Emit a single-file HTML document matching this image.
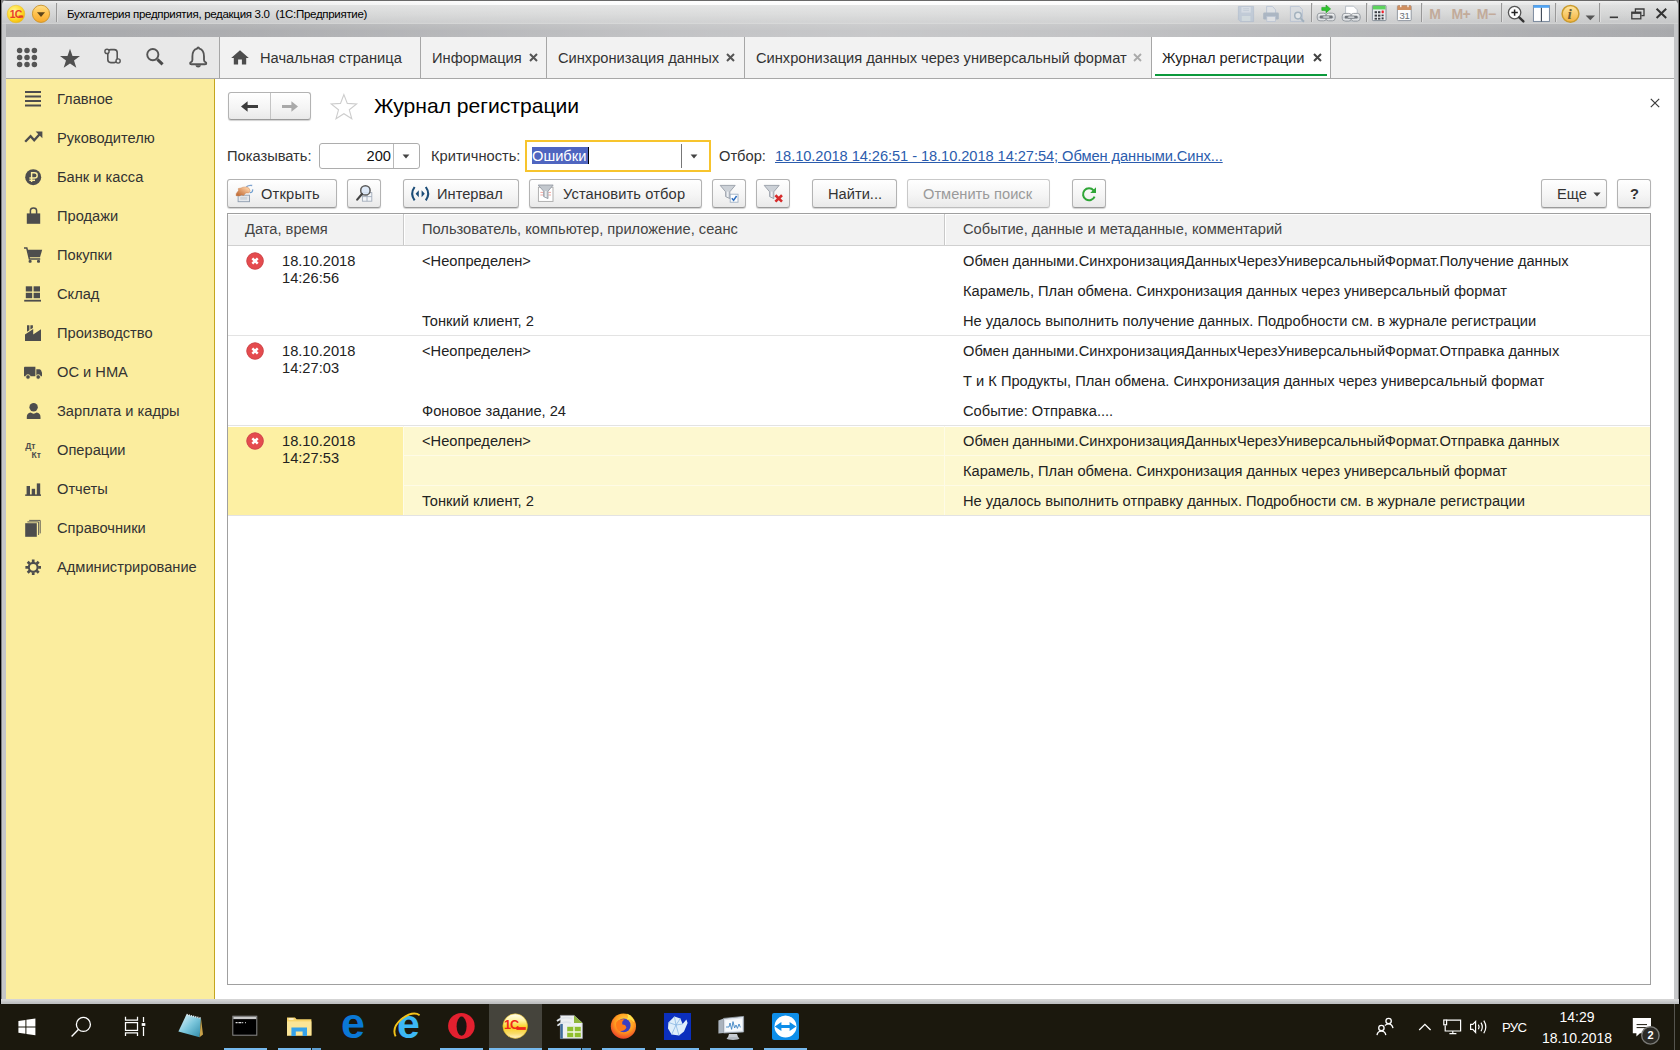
<!DOCTYPE html>
<html lang="ru">
<head>
<meta charset="utf-8">
<title>Журнал регистрации</title>
<style>
*{box-sizing:border-box;margin:0;padding:0}
html,body{width:1680px;height:1050px;overflow:hidden;background:#000}
body{position:relative;font-family:"Liberation Sans",sans-serif;font-size:14.67px;color:#333;line-height:17px}
.abs{position:absolute}
svg{position:absolute;overflow:visible}
/* window frame */
#frame{left:1px;top:0;width:1678px;height:1004px;background:#c5c6c8;border:1px solid #7e7e7e;border-top:0;border-bottom:0;border-radius:5px 5px 0 0;background-clip:padding-box}
#fbot{left:1px;top:999px;width:1678px;height:5px;background:linear-gradient(#d6d6d6 0,#d0d0d0 2px,#c3c4c5 3px,#bcbdbf 5px)}
#fcorner{left:1px;top:0;width:1678px;height:12px;background:#7e7e7e;border-radius:0}
#titlebar{left:2px;top:0;width:1676px;height:37px;border-radius:5px 5px 0 0;
 background:linear-gradient(#696969 0,#696969 1px,#ececec 1px,#e0e1e1 4px,#d4d5d5 14px,#c7c8c9 22.4px,#cfd0d0 23px,#cfd0d0 23.6px,#b1b2b4 24.2px,#a8a9ac 31px,#a9aaad 37px)}
#title{left:67px;top:6px;font-size:11.5px;color:#000;letter-spacing:-.3px;white-space:pre;line-height:16px}
.tsep{top:3px;width:2px;height:19px;background:linear-gradient(90deg,#989898 50%,#dedede 50%)}
/* tab bar */
#tabbar{left:6px;top:37px;width:1668px;height:42px;background:#f2f2f2;border-bottom:1px solid #a8a8a8}
#tools{left:6px;top:37px;width:214px;height:41px;background:#e8e8e8;border-right:1px solid #a6a6a6}
.tab{top:37px;height:41px;border-right:1px solid #a6a6a6;white-space:nowrap}
.tab span{position:absolute;top:13px;line-height:17px;color:#333}
.tx{position:absolute;top:16px;width:9px;height:9px}
/* sidebar */
#side{left:6px;top:79px;width:209px;height:920px;background:#fbed9e;border-right:1px solid #c4a51f}
.si{left:57px;white-space:nowrap;color:#333}
/* content */
#content{left:215px;top:79px;width:1459px;height:920px;background:#fff}
.btn{top:179px;height:29px;border:1px solid #b3b3b3;border-bottom-color:#9a9a9a;border-radius:3px;
 background:linear-gradient(#fff,#f4f4f4 60%,#e9e9e9);box-shadow:0 1px 1px rgba(0,0,0,.18);white-space:nowrap}
.btn span{position:absolute;top:6px;line-height:17px;color:#333}
.lbl{white-space:nowrap;color:#333}
/* table */
#tbl{left:227px;top:213px;width:1424px;height:772px;border:1px solid #a0a0a0;background:#fff}
.c{white-space:nowrap;color:#222}
/* taskbar */
#taskbar{left:0;top:1004px;width:1680px;height:46px;background:#1b180d}
.tb{color:#fff;white-space:nowrap}
</style>
</head>
<body>
<div id="fcorner" class="abs"></div>
<div id="frame" class="abs"></div>
<div id="fbot" class="abs"></div>
<div id="titlebar" class="abs"></div>
<div class="abs" style="left:6px;top:1px;width:1668px;height:3.5px;background:linear-gradient(90deg,rgba(255,255,255,0) 0,rgba(255,255,255,.9) 30%,rgba(255,255,255,.95) 52%,rgba(255,255,255,.9) 72%,rgba(255,255,255,0) 100%)"></div>
<div class="abs" style="left:6px;top:4.5px;width:1668px;height:19.5px;background:linear-gradient(90deg,rgba(255,255,255,0) 0,rgba(255,255,255,.16) 35%,rgba(255,255,255,.2) 52%,rgba(255,255,255,.16) 70%,rgba(255,255,255,0) 100%)"></div>
<div class="abs" style="left:2px;top:24px;width:1676px;height:13px;background:linear-gradient(90deg,rgba(255,255,255,0) 0,rgba(255,255,255,.06) 15%,rgba(255,255,255,.3) 40%,rgba(255,255,255,.36) 52%,rgba(255,255,255,.3) 65%,rgba(255,255,255,.1) 88%,rgba(255,255,255,0) 100%)"></div>
<div class="abs" style="left:2px;top:24px;width:4px;height:975px;background:#c5c6c8"></div><div class="abs" style="left:1674px;top:24px;width:4px;height:975px;background:#c5c6c8"></div>
<div id="title" class="abs">Бухгалтерия предприятия, редакция 3.0  (1С:Предприятие)</div>
<!--TI-S-->
<svg class="abs" style="left:0;top:0" width="1680" height="37" viewBox="0 0 1680 37">
<defs>
<radialGradient id="g1c" cx=".4" cy=".35" r=".7"><stop offset="0" stop-color="#fff79a"/><stop offset=".6" stop-color="#ffdc2e"/><stop offset="1" stop-color="#f2b705"/></radialGradient>
<linearGradient id="gor" x1="0" y1="0" x2="0" y2="1"><stop offset="0" stop-color="#ffe08a"/><stop offset=".5" stop-color="#ffc14d"/><stop offset="1" stop-color="#f7a92b"/></linearGradient>
<linearGradient id="ginf" x1="0" y1="0" x2="0" y2="1"><stop offset="0" stop-color="#ffe6a0"/><stop offset="1" stop-color="#f3b33e"/></linearGradient>
<linearGradient id="gch" x1="0" y1="0" x2="0" y2="1"><stop offset="0" stop-color="#f4f5f6"/><stop offset=".5" stop-color="#9ea3a8"/><stop offset="1" stop-color="#e4e6e8"/></linearGradient>
</defs>
<!-- 1C logo + menu -->
<circle cx="16" cy="14" r="8.8" fill="url(#g1c)" stroke="#e6bb22" stroke-width=".5"/>
<text x="9.8" y="17.7" font-family="Liberation Sans, sans-serif" font-size="10.4" font-weight="bold" fill="#e8402a" letter-spacing="-.9">1С</text>
<path d="M18.6 16.6 H23.2" stroke="#e8402a" stroke-width="2.2"/>
<circle cx="41" cy="13.8" r="8.6" fill="url(#gor)" stroke="#c9932a" stroke-width=".9"/>
<path d="M37 12.3 H45 L41 17 Z" fill="#5b431a"/>
<!-- disabled save/print/preview -->
<g opacity=".75">
<path d="M1238.4 6.4 H1253.6 V21.6 H1240.4 L1238.4 19.6 Z" fill="#b9c6d6" stroke="#a9b8cb" stroke-width=".8"/><rect x="1241.4" y="7" width="9.4" height="5.6" fill="#d3dbe5"/><rect x="1241.8" y="16" width="8.6" height="5" fill="#d0dbe0"/><path d="M1243.2 8.6 H1249 M1243.2 10.4 H1249" stroke="#b4c1d1" stroke-width=".7"/>
<path d="M1266.6 14 V6.4 H1272.4 L1275.6 9.8 V14" fill="#dfe3e8" stroke="#aebbd0" stroke-width=".9"/><rect x="1263.2" y="12.4" width="15.6" height="7.2" rx="1.4" fill="#9dabbc"/><rect x="1266.8" y="16.4" width="8.6" height="5.2" fill="#e2e5e9" stroke="#aebbd0" stroke-width=".7"/>
<path d="M1290.4 6.4 H1299.4 L1302.4 9.6 V21.4 H1290.4 Z" fill="#d9dde2" stroke="#aebbd0" stroke-width=".9"/><circle cx="1298" cy="15.6" r="3.3" fill="#e6eaee" stroke="#92a6b7" stroke-width="1.5"/><path d="M1300.6 18.4 L1304 21.8" stroke="#92a6b7" stroke-width="2"/>
</g>
<!-- link with green arrow -->
<linearGradient id="gch2" x1="0" y1="0" x2="0" y2="1"><stop offset="0" stop-color="#fafbfb"/><stop offset=".55" stop-color="#cfd3d7"/><stop offset="1" stop-color="#eceef0"/></linearGradient>
<rect x="1317.2" y="13.2" width="9.4" height="7.6" rx="2.8" fill="url(#gch2)" stroke="#8f949a" stroke-width=".9"/><rect x="1325.8" y="13.2" width="9.4" height="7.6" rx="2.8" fill="url(#gch2)" stroke="#8f949a" stroke-width=".9"/><rect x="1319.7" y="15.6" width="4.4" height="2.8" rx="1.2" fill="#6f747a"/><rect x="1328.3" y="15.6" width="4.4" height="2.8" rx="1.2" fill="#6f747a"/><rect x="1322.6000000000001" y="15.7" width="7.2" height="2.6" rx="1.3" fill="#c9cdd1" stroke="#70757b" stroke-width=".7"/>
<path d="M1321.8 7.4 H1326 V5 L1330.6 8.9 L1326 12.8 V10.4 H1321.8 Z" fill="#2fc42f" stroke="#1f9e1f" stroke-width=".6"/>
<!-- link with page -->
<path d="M1345.6 6.2 H1353.6 L1357.2 9.8 V21.2 H1345.6 Z" fill="#fff" stroke="#aab3bd" stroke-width=".8"/>
<rect x="1342.2" y="13.4" width="9.4" height="7.6" rx="2.8" fill="url(#gch2)" stroke="#8f949a" stroke-width=".9"/><rect x="1350.8" y="13.4" width="9.4" height="7.6" rx="2.8" fill="url(#gch2)" stroke="#8f949a" stroke-width=".9"/><rect x="1344.7" y="15.8" width="4.4" height="2.8" rx="1.2" fill="#6f747a"/><rect x="1353.3" y="15.8" width="4.4" height="2.8" rx="1.2" fill="#6f747a"/><rect x="1347.6000000000001" y="15.9" width="7.2" height="2.6" rx="1.3" fill="#c9cdd1" stroke="#70757b" stroke-width=".7"/>
<!-- calculator -->
<rect x="1372.4" y="5.4" width="13.6" height="15.2" rx=".8" fill="#e8ebee" stroke="#7d8791" stroke-width=".9"/><rect x="1372.9" y="5.8" width="12.6" height="3.6" fill="#5dd35d"/>
<g fill="#3c3f44"><rect x="1374.6" y="11.2" width="2.4" height="2"/><rect x="1378" y="11.2" width="2.4" height="2"/><rect x="1374.6" y="14.6" width="2.4" height="2"/><rect x="1378" y="14.6" width="2.4" height="2"/><rect x="1381.6" y="14.6" width="2" height="1.6"/><rect x="1374.6" y="17.8" width="2.4" height="1.8"/><rect x="1378" y="17.8" width="2.4" height="1.8"/><rect x="1381.6" y="17.4" width="2" height="2"/></g><rect x="1381.6" y="10.4" width="2.2" height="2.8" rx=".6" fill="#f0202a"/>
<!-- calendar -->
<rect x="1397.4" y="5.6" width="13.8" height="15" rx="1" fill="#fbfcfd" stroke="#8a919a" stroke-width=".9"/><path d="M1397.4 10 V6.6 Q1397.4 5.6 1398.4 5.6 H1410.2 Q1411.2 5.6 1411.2 6.6 V10 Z" fill="#cf8f60"/><rect x="1400.2" y="4.6" width="1.2" height="2.6" fill="#fff"/><rect x="1407.4" y="4.6" width="1.2" height="2.6" fill="#fff"/>
<text x="1399.6" y="19" font-family="Liberation Sans, sans-serif" font-size="9.5" fill="#6a6f76" letter-spacing="-.3">31</text>
<!-- M M+ M- -->
<g font-family="Liberation Sans, sans-serif" font-size="14" font-weight="bold" fill="#c2ab9b"><text x="1429.2" y="19.2">M</text><text x="1451.4" y="19.2" letter-spacing="-.6">M+</text><text x="1476.8" y="19.2" letter-spacing="-.4">M−</text></g>
<!-- zoom -->
<circle cx="1514.6" cy="12.6" r="6.2" fill="#fdfdfd" stroke="#555" stroke-width="1.3"/><path d="M1511.4 12.6 H1517.8 M1514.6 9.4 V15.8" stroke="#222" stroke-width="1.5"/><path d="M1519.2 17.4 L1523.4 21.4" stroke="#333" stroke-width="2.4" stroke-linecap="round"/>
<!-- panels -->
<rect x="1533.4" y="5.6" width="16" height="15.8" fill="#fff" stroke="#6f7f95" stroke-width=".9"/><rect x="1533.4" y="5.2" width="16" height="2.6" fill="#4fa4f4"/><path d="M1541.4 7.8 V21.4" stroke="#3a4452" stroke-width="1.1"/>
<!-- info -->
<circle cx="1570.5" cy="13.8" r="8.4" fill="url(#ginf)" stroke="#c99b2e" stroke-width="1.5"/>
<text x="1567.6" y="19.4" font-family="Liberation Serif, serif" font-size="15.5" font-weight="bold" font-style="italic" fill="#6b5d3a">i</text>
<path d="M1585.6 15.6 H1595 L1590.3 20.2 Z" fill="#555"/>
<!-- window controls -->
<path d="M1609.8 17.4 H1618" stroke="#3b3b3b" stroke-width="1.8"/><path d="M1609.8 19 H1618" stroke="#f2f2f2" stroke-width=".8"/>
<g fill="none" stroke="#3b3b3b" stroke-width="1.3"><path d="M1635.4 12 V9 H1644 V15.6 H1641.4"/><rect x="1631.8" y="12.2" width="9" height="6.6"/><path d="M1631.8 13 H1640.8" stroke-width="1.8"/></g>
<path d="M1656.6 8.8 L1666.2 18 M1666.2 8.8 L1656.6 18" stroke="#333" stroke-width="2"/>
</svg>
<div class="abs tsep" style="left:56px"></div>
<div class="abs tsep" style="left:1311px"></div>
<div class="abs tsep" style="left:1366px"></div>
<div class="abs tsep" style="left:1421px"></div>
<div class="abs tsep" style="left:1501px"></div>
<div class="abs tsep" style="left:1555px"></div>
<div class="abs tsep" style="left:1599px"></div>
<!--TI-E-->
<div id="tabbar" class="abs"></div>
<div id="tools" class="abs"></div>
<!--TABS-S-->
<!-- tool icons -->
<svg class="abs" style="left:15px;top:46px" width="24" height="22" viewBox="0 0 24 22"><g fill="#555">
<circle cx="4.6" cy="4.4" r="2.75"/><circle cx="12" cy="4.4" r="2.75"/><circle cx="19.4" cy="4.4" r="2.75"/>
<circle cx="4.6" cy="11.4" r="2.75"/><circle cx="12" cy="11.4" r="2.75"/><circle cx="19.4" cy="11.4" r="2.75"/>
<circle cx="4.6" cy="18.4" r="2.75"/><circle cx="12" cy="18.4" r="2.75"/><circle cx="19.4" cy="18.4" r="2.75"/></g></svg>
<svg class="abs" style="left:59px;top:48px" width="22" height="21" viewBox="0 0 22 21"><path fill="#505050" d="M11 0.8 L13.5 8 L21 8.1 L15 12.6 L17.3 19.8 L11 15.5 L4.7 19.8 L7 12.6 L1 8.1 L8.5 8 Z"/></svg>
<svg class="abs" style="left:0;top:0" width="220" height="79" viewBox="0 0 220 79"><g fill="none" stroke="#555" stroke-width="1.6">
<rect x="107.8" y="49.6" width="9.4" height="13" rx="3"/><circle cx="107" cy="51.4" r="2.1" fill="#e8e8e8" stroke-width="1.4"/><circle cx="118.1" cy="61" r="2.1" fill="#e8e8e8" stroke-width="1.4"/>
<circle cx="152.8" cy="54.6" r="5.6" stroke-width="1.9"/><path d="M157.4 59.4 L162.6 64.4" stroke="#4a4a4a" stroke-width="3"/>
<path d="M198.2 47.5 Q199 47.5 199.4 48.7 C203 49.7 204 53 204 56.5 V60 Q204 62 206.1 62.7 Q206.6 64 205.3 64.2 H191.1 Q189.8 64 190.3 62.7 Q192.4 62 192.4 60 V56.5 C192.4 53 193.4 49.7 197 48.7 Q197.4 47.5 198.2 47.5 Z" stroke-width="1.85" stroke-linejoin="round"/></g>
<path d="M195.4 65.2 H201 Q200.6 67.6 198.2 67.6 Q195.8 67.6 195.4 65.2 Z" fill="#555"/></svg>
<!-- tabs -->
<div class="abs tab" style="left:220px;width:201px"><svg style="left:11px;top:13px" width="18" height="15" viewBox="0 0 18 15"><path fill="#4d4d4d" d="M9 0.3 L17.8 8 H15.2 V14.4 H10.9 V9.4 H7.1 V14.4 H2.8 V8 H0.2 Z"/></svg><span style="left:40px">Начальная страница</span></div>
<div class="abs tab" style="left:421px;width:126px"><span style="left:11px">Информация</span><svg class="tx" style="left:108px" viewBox="0 0 9 9"><path d="M1 1 L8 8 M8 1 L1 8" stroke="#555" stroke-width="2"/></svg></div>
<div class="abs tab" style="left:547px;width:198px"><span style="left:11px">Синхронизация данных</span><svg class="tx" style="left:179px" viewBox="0 0 9 9"><path d="M1 1 L8 8 M8 1 L1 8" stroke="#555" stroke-width="2"/></svg></div>
<div class="abs tab" style="left:745px;width:407px"><span style="left:11px">Синхронизация данных через универсальный формат</span><svg class="tx" style="left:388px" viewBox="0 0 9 9"><path d="M1 1 L8 8 M8 1 L1 8" stroke="#aaa" stroke-width="1.8"/></svg></div>
<div class="abs tab" style="left:1152px;width:179px;background:#fff"><span style="left:10px;color:#222">Журнал регистрации</span><svg class="tx" style="left:161px" viewBox="0 0 9 9"><path d="M1 1 L8 8 M8 1 L1 8" stroke="#444" stroke-width="2"/></svg><div class="abs" style="left:3px;top:37px;width:172px;height:2px;background:#0c9a3c"></div></div>
<!--TABS-E-->
<div id="side" class="abs"></div>
<!--SIDE-S-->
<svg class="abs" style="left:0;top:0" width="215" height="600" viewBox="0 0 215 600"><g fill="#4d4d4d">
<!-- hamburger -->
<rect x="25" y="91" width="16" height="2"/><rect x="25" y="95.5" width="16" height="2"/><rect x="25" y="100" width="16" height="2"/><rect x="25" y="104.5" width="16" height="2"/>
<!-- trend -->
<path d="M25.2 141.8 L30.6 136.2 L34.2 140.2 L39.6 134.2" fill="none" stroke="#4d4d4d" stroke-width="2.3" stroke-linejoin="miter"/><path d="M35.6 131.6 H42.4 V138.2 Z"/>
<!-- ruble -->
<circle cx="33.2" cy="177.2" r="8"/>
<path d="M31.6 182 V172.8 H34.4 Q37.2 172.8 37.2 175.4 Q37.2 178 34.4 178 H29.4 M29.4 180.2 H35" fill="none" stroke="#fbed9e" stroke-width="1.4"/>
<!-- bag -->
<path d="M26.8 213.4 H40.2 V223.8 H26.8 Z"/><path d="M30.4 215 V210.6 Q30.4 207.9 33.5 207.9 Q36.6 207.9 36.6 210.6 V215" fill="none" stroke="#4d4d4d" stroke-width="1.5"/>
<!-- cart -->
<path d="M24 248 H26.8 L29.4 258.9 H40.2" fill="none" stroke="#4d4d4d" stroke-width="1.5"/><path d="M27.4 249.8 H42.2 L40 257.2 H29.2 Z"/><rect x="28.6" y="260" width="3" height="2.8" rx="1"/><rect x="37" y="260" width="3" height="2.8" rx="1"/>
<!-- sklad -->
<rect x="25.8" y="286.3" width="6.4" height="5.2"/><rect x="33.6" y="286.3" width="6.4" height="5.2"/><rect x="25.8" y="292.8" width="6.4" height="5.4"/><rect x="33.6" y="292.8" width="6.4" height="5.4"/><rect x="24.2" y="299.8" width="16.8" height="1.8"/>
<!-- factory -->
<path d="M25 341 V334.4 L33.2 329 V334.4 L41 329.2 V341 Z"/><path d="M27 325.2 H29.4 V330.2 L27 331.8 Z M30.4 325.2 H32.9 V327.9 L30.4 329.6 Z"/>
<!-- truck -->
<path d="M24.8 366.8 H35.4 V376.2 H24 V367.6 Q24 366.8 24.8 366.8 Z"/><path d="M36.3 369.2 H39.4 Q40.4 369.2 40.9 370.2 L42 372.6 V376.2 H36.3 Z"/>
<circle cx="28" cy="377" r="2.3" stroke="#fbed9e" stroke-width=".9"/><circle cx="38.2" cy="377" r="2.3" stroke="#fbed9e" stroke-width=".9"/>
<!-- person -->
<circle cx="33.6" cy="407.2" r="4.2"/><path d="M26.8 419 V417 Q26.8 413.4 30.6 412.6 Q33.6 414.8 36.6 412.6 Q40.5 413.4 40.5 417 V419 Z"/>
<!-- bars -->
<rect x="26.6" y="486" width="3.4" height="9"/><rect x="31.7" y="488.8" width="3.4" height="6.2"/><rect x="36.8" y="483.4" width="3.4" height="11.6"/><rect x="25.2" y="494.4" width="15.8" height="1.5"/>
<!-- books -->
<path d="M29.2 520.4 H40.2 V533.4" fill="none" stroke="#4d4d4d" stroke-width=".9"/><path d="M27.4 521.9 H38.6 V535" fill="none" stroke="#4d4d4d" stroke-width=".9"/><rect x="25.2" y="523.2" width="11.6" height="13.6"/>
<!-- gear -->
<circle cx="33.2" cy="567.3" r="4.4" fill="none" stroke="#4d4d4d" stroke-width="2.1"/>
<g stroke="#4d4d4d" stroke-width="2.7" fill="none"><path d="M33.2 559.5 V562.3 M33.2 572.3 V575.1 M25.4 567.3 H28.2 M38.2 567.3 H41 M27.7 561.8 L29.7 563.8 M36.7 570.8 L38.7 572.8 M38.7 561.8 L36.7 563.8 M29.7 570.8 L27.7 572.8"/></g>
</g>
<text x="25.2" y="449.4" font-family="Liberation Sans, sans-serif" font-size="8.6" font-weight="bold" fill="#4d4d4d">Дт</text>
<text x="31.4" y="458.2" font-family="Liberation Sans, sans-serif" font-size="8.6" font-weight="bold" fill="#4d4d4d">Кт</text>
</svg>
<div class="abs si" style="top:91px">Главное</div>
<div class="abs si" style="top:130px">Руководителю</div>
<div class="abs si" style="top:169px">Банк и касса</div>
<div class="abs si" style="top:208px">Продажи</div>
<div class="abs si" style="top:247px">Покупки</div>
<div class="abs si" style="top:286px">Склад</div>
<div class="abs si" style="top:325px">Производство</div>
<div class="abs si" style="top:364px">ОС и НМА</div>
<div class="abs si" style="top:403px">Зарплата и кадры</div>
<div class="abs si" style="top:442px">Операции</div>
<div class="abs si" style="top:481px">Отчеты</div>
<div class="abs si" style="top:520px">Справочники</div>
<div class="abs si" style="top:559px">Администрирование</div>
<!--SIDE-E-->
<div id="content" class="abs"></div>
<!--FORM-S-->
<!-- nav buttons -->
<div class="abs btn" style="left:228px;top:92px;width:83px;height:28px"></div>
<div class="abs" style="left:270px;top:93px;width:1px;height:26px;background:#c4c4c4"></div>
<svg class="abs" style="left:240px;top:100px" width="60" height="13" viewBox="0 0 60 13"><path d="M1 6.5 L7.6 1.2 V4.9 H18 V8.1 H7.6 V11.8 Z" fill="#3d3d3d"/><path d="M58 6.5 L51.4 1.2 V4.9 H42 V8.1 H51.4 V11.8 Z" fill="#a9a9a9"/></svg>
<svg class="abs" style="left:329px;top:93px" width="30" height="28" viewBox="0 0 30 28"><path d="M14.9 1.6 L18.3 10.4 L27.6 10.9 L20.3 16.8 L22.8 25.8 L14.9 20.7 L7.0 25.8 L9.5 16.8 L2.2 10.9 L11.5 10.4 Z" fill="#fff" stroke="#cdcdcd" stroke-width="1.1" stroke-linejoin="miter"/></svg>
<div class="abs" style="left:374px;top:94px;font-size:21.1px;line-height:24px;color:#000;white-space:nowrap">Журнал регистрации</div>
<svg class="abs" style="left:1650px;top:98px" width="10" height="10" viewBox="0 0 10 10"><path d="M0.8 0.8 L9.2 9.2 M9.2 0.8 L0.8 9.2" stroke="#3a3a3a" stroke-width="1.2"/></svg>
<!-- filters row -->
<div class="abs lbl" style="left:227px;top:148px">Показывать:</div>
<div class="abs" style="left:319px;top:143px;width:101px;height:26px;border:1px solid #adadad;border-radius:3px;background:#fff"></div>
<div class="abs" style="left:393px;top:144px;width:1px;height:24px;background:#b9b9b9"></div>
<div class="abs lbl" style="left:341px;top:148px;width:50px;text-align:right;color:#111">200</div>
<svg class="abs" style="left:402px;top:154px" width="8" height="5" viewBox="0 0 8 5"><path d="M0.6 0.5 H7.4 L4 4.6 Z" fill="#444"/></svg>
<div class="abs lbl" style="left:431px;top:148px">Критичность:</div>
<div class="abs" style="left:525px;top:140px;width:186px;height:32px;border:2px solid #f7c42d;background:#fff"></div>
<div class="abs" style="left:532px;top:147px;width:56px;height:17px;background:#4f65c0"></div>
<div class="abs" style="left:588px;top:147px;width:1px;height:17px;background:#000"></div>
<div class="abs lbl" style="left:532px;top:148px;color:#fff">Ошибки</div>
<div class="abs" style="left:681px;top:144px;width:1px;height:24px;background:#777"></div>
<svg class="abs" style="left:690px;top:154px" width="8" height="5" viewBox="0 0 8 5"><path d="M0.6 0.5 H7.4 L4 4.6 Z" fill="#444"/></svg>
<div class="abs lbl" style="left:719px;top:148px">Отбор:</div>
<div class="abs lbl" style="left:775px;top:148px;color:#2b5cad;text-decoration:underline;letter-spacing:-.07px">18.10.2018 14:26:51 - 18.10.2018 14:27:54; Обмен данными.Синх...</div>
<!-- buttons row -->
<div class="abs btn" style="left:227px;width:110px"><span style="left:33px;letter-spacing:.2px">Открыть</span>
<svg style="left:7px;top:4px" width="20" height="19" viewBox="0 0 20 19"><defs><linearGradient id="hnd" x1="0" y1="1" x2="1" y2="0"><stop offset="0" stop-color="#b9602a"/><stop offset=".45" stop-color="#dc9867"/><stop offset=".8" stop-color="#fbcb9f"/><stop offset="1" stop-color="#f1b887"/></linearGradient></defs><rect x="3.1" y="11.2" width="11.4" height="6.5" fill="#e6e9ed" stroke="#8d9bae" stroke-width=".9"/><rect x="5.2" y="12.8" width="7" height="3" fill="#cfd5db"/><path d="M11.4 2.7 Q13.8 .8 17.2 1.5" fill="none" stroke="#7fa3cf" stroke-width="1.3"/><path d="M14.8 8.6 Q17.9 8.7 17.6 5.4" fill="none" stroke="#6f9fd0" stroke-width="1.3"/><path d="M1 11.7 L1.3 9.4 L3.5 6.6 L3.3 4.5 L6 4 L8 3.2 L12 2.9 Q14.8 4 15 6.6 Q15.2 8.6 13.6 8.9 L10.8 9 L8.6 11.5 L6.4 11 L4.6 11.9 Z" fill="url(#hnd)" stroke="#c27a47" stroke-width=".4"/></svg></div>
<div class="abs btn" style="left:347px;width:34px"><svg style="left:7px;top:4px" width="20" height="20" viewBox="0 0 20 20"><rect x="7.4" y="8.6" width="9.4" height="8.6" fill="#f4f6f9" stroke="#a3adbb" stroke-width=".9"/><path d="M7.4 12.6 H16.8 M12 8.6 V17.2" stroke="#a3adbb" stroke-width=".9"/><circle cx="10.4" cy="6.4" r="4.7" fill="#dbe8f8" fill-opacity=".85" stroke="#5a5a5a" stroke-width="1.5"/><path d="M7 10 L2.2 15.6" stroke="#444" stroke-width="2.2" stroke-linecap="round"/></svg></div>
<div class="abs btn" style="left:403px;width:116px"><span style="left:33px">Интервал</span>
<svg style="left:6px;top:6px" width="22" height="16" viewBox="0 0 22 16"><path d="M4.6 1 Q-0.2 7.6 4.6 14.4" fill="none" stroke="#1b4c77" stroke-width="2.1"/><path d="M15.8 1 Q20.6 7.6 15.8 14.4" fill="none" stroke="#1b4c77" stroke-width="2.1"/><path d="M5.6 7.7 L8.8 4.2 V11.2 Z M14.8 7.7 L11.6 4.2 V11.2 Z" fill="#1b4c77"/></svg></div>
<div class="abs btn" style="left:529px;width:173px"><span style="left:33px;letter-spacing:.12px">Установить отбор</span>
<svg style="left:7px;top:4px" width="18" height="19" viewBox="0 0 18 19"><rect x="1.4" y="3.2" width="14.6" height="14.2" fill="#fff" stroke="#a9a9a9" stroke-width=".9"/><path d="M3.4 8.4 H6.4 M11.4 8.4 H14 M3.4 11 H6.4 M11.4 11 H14" stroke="#f0a7a0" stroke-width="1"/><path d="M1.2 1 H16.2 L11 7.2 V14.6 L6.6 12.6 V7.2 Z" fill="#c3c8ce" stroke="#8f969f" stroke-width=".8"/><path d="M8.8 7 V13" stroke="#e9ecef" stroke-width="1.6"/></svg></div>
<div class="abs btn" style="left:712px;width:34px"><svg style="left:6px;top:4px" width="22" height="20" viewBox="0 0 22 20"><path d="M1.2 1.4 H16.2 L10.8 7.8 V14.6 L6.6 12.6 V7.8 Z" fill="#ccd1d7" stroke="#8f969f" stroke-width=".8"/><path d="M8.7 7.6 V13" stroke="#eceff2" stroke-width="1.5"/><rect x="11.2" y="10.2" width="7.8" height="8" fill="#fff" stroke="#9fb0c4" stroke-width=".9"/><path d="M12.8 14.2 L14.6 16.2 L17.6 12" fill="none" stroke="#2f6fc0" stroke-width="1.5"/></svg></div>
<div class="abs btn" style="left:756px;width:34px"><svg style="left:6px;top:4px" width="22" height="20" viewBox="0 0 22 20"><path d="M1.2 1.4 H16.2 L10.8 7.8 V14.6 L6.6 12.6 V7.8 Z" fill="#ccd1d7" stroke="#8f969f" stroke-width=".8"/><path d="M8.7 7.6 V13" stroke="#eceff2" stroke-width="1.5"/><path d="M12.4 11.2 L19 17.6 M19 11.2 L12.4 17.6" stroke="#d62b2b" stroke-width="2.6"/></svg></div>
<div class="abs btn" style="left:812px;width:85px"><span style="left:15px">Найти...</span></div>
<div class="abs btn" style="left:907px;width:143px;border-color:#c9c9c9;border-bottom-color:#bdbdbd;box-shadow:0 1px 1px rgba(0,0,0,.08)"><span style="left:15px;color:#9a9a9a">Отменить поиск</span></div>
<div class="abs btn" style="left:1072px;width:34px"><svg style="left:7px;top:5px" width="20" height="18" viewBox="0 0 20 18"><path d="M13.6 5.4 A6 6 0 1 0 14.6 11.6" fill="none" stroke="#2fa637" stroke-width="2"/><path d="M16 2.2 V7.9 H10.2 Z" fill="#2fa637"/></svg></div>
<div class="abs btn" style="left:1541px;width:66px"><span style="left:15px">Еще</span><svg style="left:51px;top:12px" width="8" height="5" viewBox="0 0 8 5"><path d="M0.4 0.5 H7.6 L4 4.6 Z" fill="#444"/></svg></div>
<div class="abs btn" style="left:1617px;width:34px"><span style="left:12px;font-weight:bold;color:#333">?</span></div>
<!--FORM-E-->
<div id="tbl" class="abs"></div>
<!--TABLE-S-->
<div class="abs" style="left:228px;top:215px;width:1422px;height:30px;background:#f2f2f2"></div>
<div class="abs" style="left:228px;top:245px;width:1422px;height:1px;background:#d0d0d0"></div>
<div class="abs" style="left:403px;top:214px;width:2px;height:31px;background:linear-gradient(90deg,#c9c9c9 50%,#fff 50%)"></div>
<div class="abs" style="left:944px;top:214px;width:2px;height:31px;background:linear-gradient(90deg,#c9c9c9 50%,#fff 50%)"></div>
<div class="abs lbl" style="left:245px;top:221px;color:#444">Дата, время</div>
<div class="abs lbl" style="left:422px;top:221px;color:#444">Пользователь, компьютер, приложение, сеанс</div>
<div class="abs lbl" style="left:963px;top:221px;color:#444">Событие, данные и метаданные, комментарий</div>
<div class="abs" style="left:228px;top:335px;width:1422px;height:1px;background:#e3e3e3"></div>
<svg class="abs" style="left:246px;top:252px" width="18" height="18" viewBox="0 0 18 18"><circle cx="9.05" cy="9" r="8.6" fill="#e54b4e"/><circle cx="9.05" cy="9" r="8.2" fill="none" stroke="#c9474b" stroke-width=".8"/><path d="M6.35 6.3 L11.75 11.7 M11.75 6.3 L6.35 11.7" stroke="#fff" stroke-width="2.4"/></svg>
<div class="abs c" style="left:282px;top:253px">18.10.2018<br>14:26:56</div>
<div class="abs c" style="left:422px;top:253px">&lt;Неопределен&gt;</div>
<div class="abs c" style="left:422px;top:313px">Тонкий клиент, 2</div>
<div class="abs c" style="left:963px;top:253px">Обмен данными.СинхронизацияДанныхЧерезУниверсальныйФормат.Получение данных</div>
<div class="abs c" style="left:963px;top:283px">Карамель, План обмена. Синхронизация данных через универсальный формат</div>
<div class="abs c" style="left:963px;top:313px">Не удалось выполнить получение данных. Подробности см. в журнале регистрации</div>
<div class="abs" style="left:228px;top:425px;width:1422px;height:1px;background:#e3e3e3"></div>
<svg class="abs" style="left:246px;top:342px" width="18" height="18" viewBox="0 0 18 18"><circle cx="9.05" cy="9" r="8.6" fill="#e54b4e"/><circle cx="9.05" cy="9" r="8.2" fill="none" stroke="#c9474b" stroke-width=".8"/><path d="M6.35 6.3 L11.75 11.7 M11.75 6.3 L6.35 11.7" stroke="#fff" stroke-width="2.4"/></svg>
<div class="abs c" style="left:282px;top:343px">18.10.2018<br>14:27:03</div>
<div class="abs c" style="left:422px;top:343px">&lt;Неопределен&gt;</div>
<div class="abs c" style="left:422px;top:403px">Фоновое задание, 24</div>
<div class="abs c" style="left:963px;top:343px">Обмен данными.СинхронизацияДанныхЧерезУниверсальныйФормат.Отправка данных</div>
<div class="abs c" style="left:963px;top:373px">Т и К Продукты, План обмена. Синхронизация данных через универсальный формат</div>
<div class="abs c" style="left:963px;top:403px">Событие: Отправка....</div>
<div class="abs" style="left:228px;top:427px;width:175px;height:88px;background:#fdf0a3"></div>
<div class="abs" style="left:403px;top:427px;width:1247px;height:88px;background:#fdf8d0"></div>
<div class="abs" style="left:403px;top:426px;width:1px;height:89px;background:#fefbe6"></div>
<div class="abs" style="left:944px;top:426px;width:1px;height:89px;background:#fefbe6"></div>
<div class="abs" style="left:403px;top:455px;width:1247px;height:1px;background:#fefbe6"></div>
<div class="abs" style="left:403px;top:485px;width:1247px;height:1px;background:#fefbe6"></div>
<div class="abs" style="left:228px;top:515px;width:1422px;height:1px;background:#e3e3e3"></div>
<svg class="abs" style="left:246px;top:432px" width="18" height="18" viewBox="0 0 18 18"><circle cx="9.05" cy="9" r="8.6" fill="#e54b4e"/><circle cx="9.05" cy="9" r="8.2" fill="none" stroke="#c9474b" stroke-width=".8"/><path d="M6.35 6.3 L11.75 11.7 M11.75 6.3 L6.35 11.7" stroke="#fff" stroke-width="2.4"/></svg>
<div class="abs c" style="left:282px;top:433px">18.10.2018<br>14:27:53</div>
<div class="abs c" style="left:422px;top:433px">&lt;Неопределен&gt;</div>
<div class="abs c" style="left:422px;top:493px">Тонкий клиент, 2</div>
<div class="abs c" style="left:963px;top:433px">Обмен данными.СинхронизацияДанныхЧерезУниверсальныйФормат.Отправка данных</div>
<div class="abs c" style="left:963px;top:463px">Карамель, План обмена. Синхронизация данных через универсальный формат</div>
<div class="abs c" style="left:963px;top:493px">Не удалось выполнить отправку данных. Подробности см. в журнале регистрации</div>
<!--TABLE-E-->
<div id="taskbar" class="abs"></div>
<!--TB-S-->
<div class="abs" style="left:489px;top:1004px;width:53px;height:46px;background:#45443c"></div>
<svg class="abs" style="left:0;top:1004px" width="1680" height="46" viewBox="0 1004 1680 46">
<defs>
<linearGradient id="tb1c" x1="0" y1="0" x2="0" y2="1"><stop offset="0" stop-color="#fffef2"/><stop offset=".28" stop-color="#fff3a0"/><stop offset=".55" stop-color="#f8d020"/><stop offset=".8" stop-color="#f9dc6a"/><stop offset="1" stop-color="#fff4cf"/></linearGradient>
<radialGradient id="ff" cx=".55" cy=".35" r=".7"><stop offset="0" stop-color="#ffe14a"/><stop offset=".55" stop-color="#ff9a1f"/><stop offset="1" stop-color="#e8352b"/></radialGradient>
<linearGradient id="np" x1="0" y1="0" x2="1" y2="1"><stop offset="0" stop-color="#e8f6fb"/><stop offset=".5" stop-color="#7cc7dc"/><stop offset="1" stop-color="#2e8aa8"/></linearGradient>
<linearGradient id="ie" x1="0" y1="0" x2="0" y2="1"><stop offset="0" stop-color="#7fdcff"/><stop offset="1" stop-color="#1f8fe0"/></linearGradient>
</defs>
<!-- indicators -->
<g fill="#76b9ed"><rect x="224" y="1048" width="43" height="2"/><rect x="278" y="1048" width="33" height="2"/><rect x="312" y="1048" width="9" height="2" fill="#5f9fd2"/><rect x="440" y="1048" width="43" height="2"/><rect x="489" y="1048" width="53" height="2"/><rect x="548" y="1048" width="33" height="2"/><rect x="582" y="1048" width="9" height="2" fill="#5f9fd2"/><rect x="602" y="1048" width="43" height="2"/><rect x="656" y="1048" width="43" height="2"/><rect x="710" y="1048" width="43" height="2"/><rect x="764" y="1048" width="43" height="2"/></g>
<!-- start -->
<path d="M18.4 1021 L25.4 1020 V1026.4 H18.4 Z M26.4 1019.8 L35.4 1018.6 V1026.4 H26.4 Z M18.4 1027.4 H25.4 V1033.8 L18.4 1032.8 Z M26.4 1027.4 H35.4 V1035.2 L26.4 1034 Z" fill="#fff"/>
<!-- search -->
<circle cx="83.4" cy="1024.4" r="7" fill="none" stroke="#fff" stroke-width="1.3"/><path d="M78.4 1029.6 L71.6 1036.4" stroke="#fff" stroke-width="1.4"/>
<!-- task view -->
<g fill="none" stroke="#fff" stroke-width="1.25"><rect x="125.5" y="1022.6" width="12" height="7.8"/><path d="M125.5 1016.7 V1020 H137.5 V1016.7 M125.5 1036.1 V1032.9 H137.5 V1036.1 M143.5 1016.9 V1022 M143.5 1027 V1036.1"/></g><rect x="141.7" y="1023.1" width="3.6" height="2.8" fill="#fff"/>
<!-- notepad -->
<path d="M186.4 1014.6 L201 1018.4 L199.6 1037.2 L178.4 1031.6 Z" fill="url(#np)"/><path d="M201 1018.4 L203 1034.4 L199.6 1037.2 Z" fill="#c9a24a"/><path d="M186.6 1014.6 L200.8 1018.2" stroke="#dfe9ee" stroke-width="1.6" stroke-dasharray="1.2 1"/>
<!-- cmd -->
<rect x="232.8" y="1016.2" width="24" height="19" fill="#000" stroke="#8a8a8a" stroke-width="1"/><rect x="233.3" y="1016.7" width="23" height="2.4" fill="#c9c9c9"/><path d="M235.6 1022.6 H246" stroke="#ddd" stroke-width="1.3" stroke-dasharray="2 .8 3 .8 1"/>
<!-- explorer -->
<path d="M287 1017.4 H295 L296.6 1019.2 H311.4 V1035.6 H287 Z" fill="#f7d46a"/><path d="M287 1021.4 H311.4 V1035.6 H287 Z" fill="#fbe597"/><path d="M291.4 1036 V1027.6 H307 V1036 H302.6 V1031.4 H295.8 V1036 Z" fill="#35a2ea"/><rect x="288.6" y="1018.4" width="5" height="1.2" fill="#fff"/>
<!-- opera -->
<ellipse cx="461.4" cy="1026" rx="13.3" ry="13" fill="#e3202f"/><ellipse cx="461.6" cy="1026.2" rx="5" ry="9.6" fill="#1b1511"/>
<!-- 1C -->
<circle cx="515.2" cy="1026.1" r="12.3" fill="url(#tb1c)" stroke="#e2b81c" stroke-width=".6"/><path d="M516.4 1028.5 H525.8" stroke="#f0281a" stroke-width="2.8"/>
<!-- calc -->
<path d="M560.4 1015.4 H574 L582.4 1023 V1038.6 H560.4 Z" fill="#eef0f1" stroke="#9aa0a6" stroke-width=".8"/><path d="M574 1015.4 V1023 H582.4 Z" fill="#8fb63c"/><rect x="567.2" y="1026.8" width="13.6" height="10.4" fill="#8fbf2e"/><path d="M567.2 1032 H580.8 M574 1026.8 V1037.2" stroke="#f2f7e4" stroke-width="1.4"/><path d="M557 1021 Q563 1016 572 1018.6 M557.4 1025.6 Q564 1020.4 571 1023" fill="none" stroke="#dfe4ea" stroke-width="1.8"/><rect x="560.4" y="1024" width="2.4" height="14.6" fill="#3f6e9e"/>
<!-- firefox -->
<circle cx="623.4" cy="1026.2" r="12.6" fill="url(#ff)"/><circle cx="623.8" cy="1025.4" r="6.8" fill="#3a3fc4"/><path d="M616.4 1022 Q619.4 1018.4 624.6 1019.6 Q621.4 1021.4 622.4 1024.4 Q626 1024.4 626.4 1027.8 Q623.4 1032.4 618 1030.4 Q615 1026.6 616.4 1022 Z" fill="#ff7a1a"/><path d="M626.6 1013.6 Q633.4 1015.6 634.4 1022.6 Q631 1018.4 626.8 1019.6 Q629.2 1016.4 626.6 1013.6 Z" fill="#ffe24a"/>
<!-- blue square bird -->
<rect x="664" y="1013" width="27" height="27" fill="#0b2fbd"/><path d="M668.4 1022.4 L674.4 1016.4 L680.4 1018.4 L682.6 1024 L686.4 1019.6 L687.6 1023 L684 1031.4 L679 1035.6 L671.6 1034.6 L668 1028.4 Z" fill="#dfeefb"/><path d="M674.4 1016.4 L676 1025 L668.4 1022.4 M676 1025 L682.6 1024 M676 1025 L671.6 1034.6 M676 1025 L679 1035.6 M680.4 1018.4 L676 1025" stroke="#7fb0e0" stroke-width=".7" fill="none"/>
<!-- monitor -->
<path d="M723.6 1018.4 L743.6 1016.4 V1032 L723.6 1033 Z" fill="#dfe6ee" stroke="#9aa3ad" stroke-width=".8"/><path d="M725.2 1020.2 L742 1018.4 V1030.4 L725.2 1031.4 Z" fill="#f7fafc"/><path d="M726 1027 H729 L730 1023 L731.6 1029.4 L733 1021.6 L734.6 1028 L736 1025 L737.4 1028.4 L739 1024 L740.4 1027.4" fill="none" stroke="#3f86c4" stroke-width=".9"/><path d="M718.4 1020.4 L723.6 1018.4 V1033 L718.4 1033.6 Z" fill="#aab3bd"/><path d="M729 1034 H737 L738.6 1038.4 H727.6 Z" fill="#c7ccd2"/><ellipse cx="733" cy="1038.4" rx="6.4" ry="1.5" fill="#b4bac1"/>
<!-- teamviewer -->
<rect x="772" y="1013" width="27" height="27" rx="2" fill="#0e8ee9"/><circle cx="785.5" cy="1026.5" r="11" fill="#fff"/><path d="M774.8 1026.5 L781.4 1022 V1025 H789.6 V1022 L796.2 1026.5 L789.6 1031 V1028 H781.4 V1031 Z" fill="#0e8ee9"/>
<!-- people -->
<g fill="none" stroke="#fff" stroke-width="1.3"><circle cx="1388.6" cy="1021" r="2.7"/><path d="M1384.8 1025.4 Q1388.6 1022.6 1391.4 1025 Q1392.6 1026.2 1393 1028.2"/><circle cx="1381.4" cy="1028" r="2.7"/><path d="M1377 1035.2 Q1377.6 1031.2 1381.4 1031.2 Q1385.2 1031.2 1385.8 1035.2"/></g>
<!-- chevron -->
<path d="M1419.2 1030 L1424.9 1024.4 L1430.6 1030" fill="none" stroke="#fff" stroke-width="1.3"/>
<!-- network -->
<g fill="none" stroke="#fff" stroke-width="1.2"><path d="M1446.6 1020.2 H1460.6 V1031 H1445.2 V1025.4"/><path d="M1452.8 1031 V1033.4 M1449.4 1033.6 H1456.4"/><rect x="1443.8" y="1020" width="2.8" height="4.8" fill="#1b180d"/></g>
<!-- volume -->
<g fill="none" stroke="#fff" stroke-width="1.2"><path d="M1470.6 1024.4 H1472.8 L1475.6 1021.4 V1032.4 L1472.8 1029.4 H1470.6 Z"/><path d="M1478.4 1024.6 Q1479.8 1026.9 1478.4 1029.2 M1481 1022.6 Q1483.6 1026.9 1481 1031.2 M1483.8 1020.6 Q1487.8 1026.9 1483.8 1033.2"/></g>
<!-- notifications -->
<path d="M1632.8 1018 H1651 V1033.2 H1640 L1636.4 1036.6 V1033.2 H1632.8 Z" fill="#fff"/><path d="M1636.6 1024.6 H1647 M1636.6 1027.6 H1647" stroke="#1b180d" stroke-width="1"/>
<circle cx="1650.4" cy="1035.4" r="8.7" fill="#2c2b26" stroke="#7a7a76" stroke-width="1.4"/>
<rect x="1674" y="1004" width="1" height="46" fill="#55544e"/>
</svg>
<div class="abs" style="left:341px;top:1001px;width:26px;height:44px;font-size:43px;line-height:44px;font-weight:bold;color:#0a78d6">e</div>
<div class="abs" style="left:397px;top:1003px;width:26px;height:42px;font-size:41px;line-height:42px;font-weight:bold;color:#3cb8f5">e</div>
<svg class="abs" style="left:392px;top:1012px" width="30" height="28" viewBox="0 0 30 28"><path d="M27.6 3.2 Q21 -1.4 9.6 7 Q-0.6 15.6 3.6 24.4" fill="none" stroke="#f2c21a" stroke-width="1.9"/></svg>
<div class="abs tb" style="left:504px;top:1018px;font-size:12.6px;font-weight:bold;color:#f0281a;letter-spacing:-1px;line-height:14px">1С</div>
<div class="abs tb" style="left:1502px;top:1019px;font-size:13.2px;line-height:17px;letter-spacing:-.7px">РУС</div>
<div class="abs tb" style="left:1537px;top:1009px;width:80px;text-align:center;font-size:14px;line-height:17px">14:29</div>
<div class="abs tb" style="left:1537px;top:1030px;width:80px;text-align:center;font-size:14px;line-height:17px">18.10.2018</div>
<div class="abs tb" style="left:1646px;top:1028px;width:9px;text-align:center;font-size:11px;font-weight:bold;line-height:14px">2</div>
<!--TB-E-->
</body>
</html>
